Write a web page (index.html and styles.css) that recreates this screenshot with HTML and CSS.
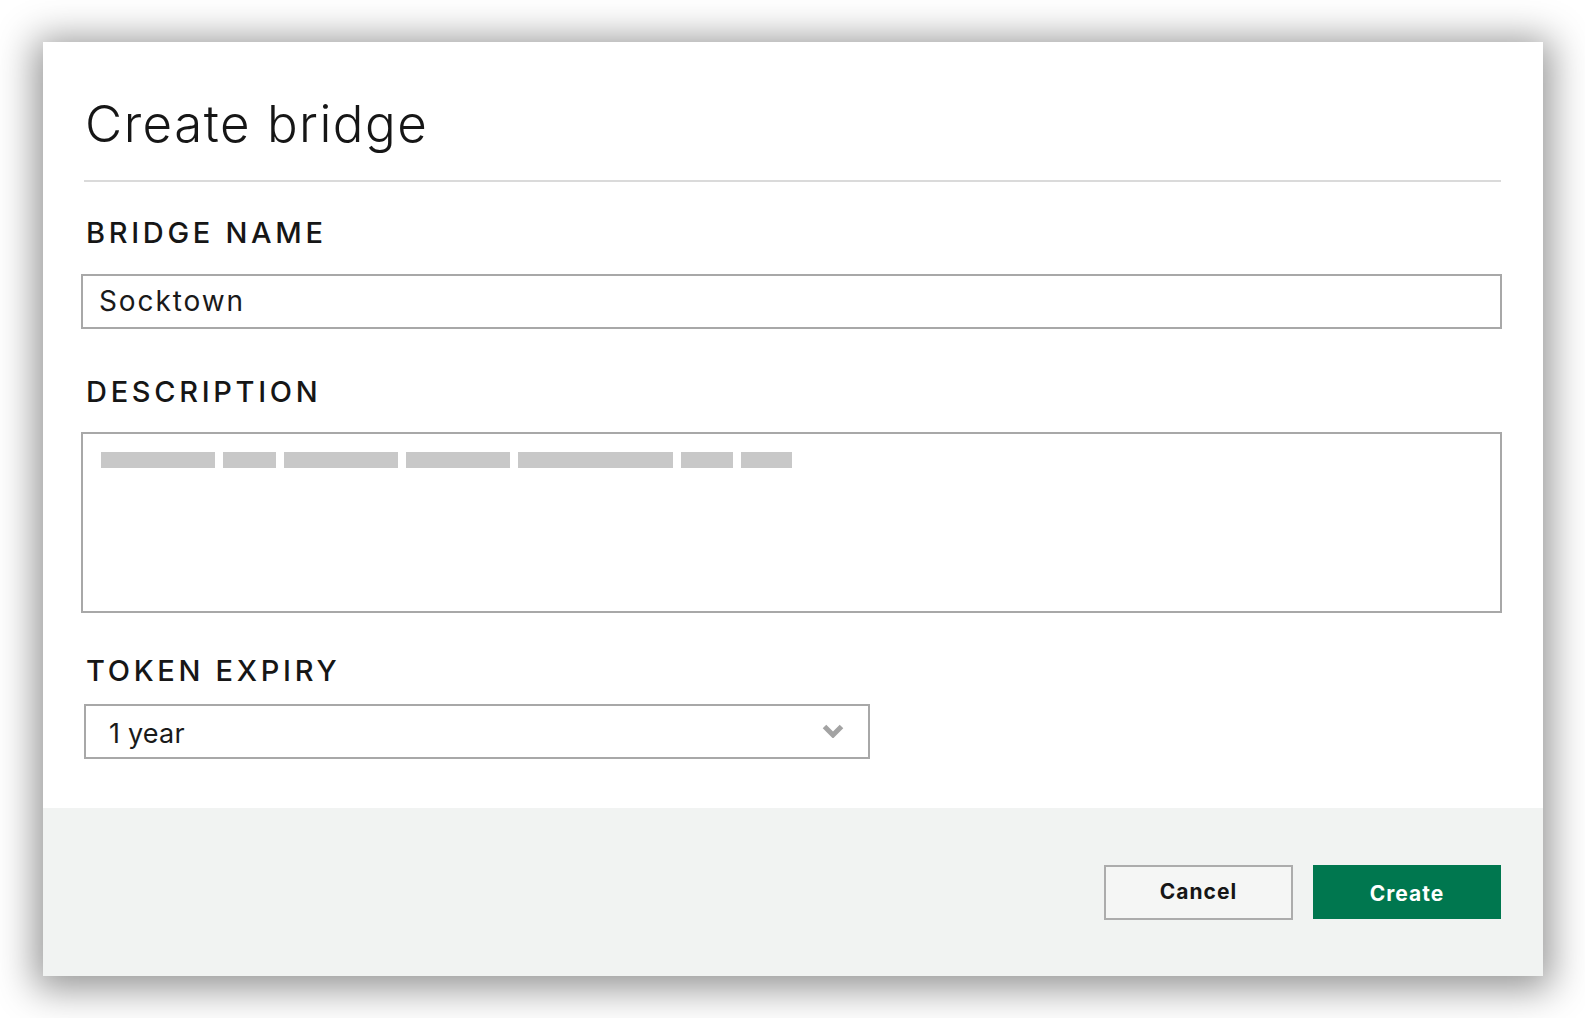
FILE: index.html
```html
<!DOCTYPE html>
<html lang="en">
<head>
<meta charset="utf-8">
<title>Create bridge</title>
<link rel="stylesheet" href="styles.css">
</head>
<body>
<div class="dialog">
  <div class="dialog-main">
    <div class="dialog-header">
      <h1 class="dialog-title">Create bridge</h1>
    </div>
    <label class="field-label label-name">BRIDGE NAME</label>
    <div class="text-input">Socktown</div>
    <label class="field-label label-desc">DESCRIPTION</label>
    <div class="text-area">
      <span class="skel" style="width:114px"></span>
      <span class="skel" style="width:53px"></span>
      <span class="skel" style="width:114px"></span>
      <span class="skel" style="width:104px"></span>
      <span class="skel" style="width:155px"></span>
      <span class="skel" style="width:52px"></span>
      <span class="skel" style="width:51px"></span>
    </div>
    <label class="field-label label-expiry">TOKEN EXPIRY</label>
    <div class="select">
      <span class="select-value">1 year</span>
      <svg class="chevron" width="22" height="14" viewBox="0 0 22 14"><polyline points="2.5,2.5 11,11 19.5,2.5" fill="none" stroke="#a3a3a3" stroke-width="5"/></svg>
    </div>
  </div>
  <div class="dialog-footer">
    <button class="btn btn-cancel">Cancel</button>
    <button class="btn btn-create">Create</button>
  </div>
</div>
</body>
</html>
```

FILE: styles.css
```css
html, body {
  margin: 0;
  padding: 0;
  background: #ffffff;
}
body {
  padding: 42px 0 42px 43px;
  min-height: 1018px;
  box-sizing: border-box;
  font-family: Inter, "Noto Sans", "Liberation Sans", sans-serif;
  color: #1a1a1a;
}
.dialog {
  width: 1500px;
  height: 934px;
  background: #ffffff;
  box-shadow: 0 5px 36px 8px rgba(0, 0, 0, 0.42);
  display: flex;
  flex-direction: column;
}
.dialog-main {
  flex: 1;
  padding: 0 42px 0 41px;
  display: flex;
  flex-direction: column;
  align-items: flex-start;
}
.dialog-header {
  align-self: stretch;
  padding: 52px 0 26px 0;
  border-bottom: 2px solid #dadada;
}
.dialog-title {
  margin: 0 0 0 1px;
  font-size: 51px;
  line-height: 60px;
  font-weight: 300;
  letter-spacing: 1.5px;
  color: #161616;
}
.field-label {
  display: block;
  font-size: 29px;
  line-height: 36px;
  font-weight: 500;
  letter-spacing: 3.7px;
  margin-left: 2px;
  color: #161616;
}
.label-name { margin-top: 33px; margin-bottom: 23px; }
.label-desc { margin-top: 45px; margin-bottom: 22px; }
.label-expiry { margin-top: 40px; margin-bottom: 15px; }
.text-input {
  box-sizing: border-box;
  width: calc(100% + 4px);
  margin-left: -3px;
  height: 55px;
  border: 2px solid #a8a8a8;
  padding: 0 16px;
  font-size: 28px;
  line-height: 51px;
  letter-spacing: 1.9px;
  color: #1a1a1a;
}
.text-area {
  box-sizing: border-box;
  width: calc(100% + 4px);
  margin-left: -3px;
  height: 181px;
  border: 2px solid #a8a8a8;
  padding: 18px 18px;
  display: flex;
  align-items: flex-start;
  gap: 8px;
}
.skel {
  display: block;
  height: 16px;
  background: #c8c8c8;
}
.select {
  box-sizing: border-box;
  width: 786px;
  height: 55px;
  border: 2px solid #a8a8a8;
  padding: 0 24px 0 23px;
  display: flex;
  align-items: center;
  justify-content: space-between;
}
.select-value {
  font-size: 27px;
  letter-spacing: 0.2px;
  margin-top: 3px;
}
.chevron {
  display: block;
  margin-top: -1px;
}
.dialog-footer {
  height: 168px;
  box-sizing: border-box;
  background: #f1f3f2;
  padding: 57px 42px 0 0;
  display: flex;
  justify-content: flex-end;
  align-items: flex-start;
  gap: 20px;
}
.btn {
  box-sizing: border-box;
  font-family: inherit;
  font-size: 21px;
  font-weight: 700;
  letter-spacing: 1px;
  cursor: pointer;
  padding: 0;
}
.btn-cancel {
  width: 189px;
  height: 55px;
  background: #f5f6f5;
  border: 2px solid #acacac;
  color: #161616;
  padding-bottom: 3px;
}
.btn-create {
  width: 188px;
  height: 54px;
  background: #00774f;
  border: none;
  color: #ffffff;
  padding-top: 2px;
}
```
